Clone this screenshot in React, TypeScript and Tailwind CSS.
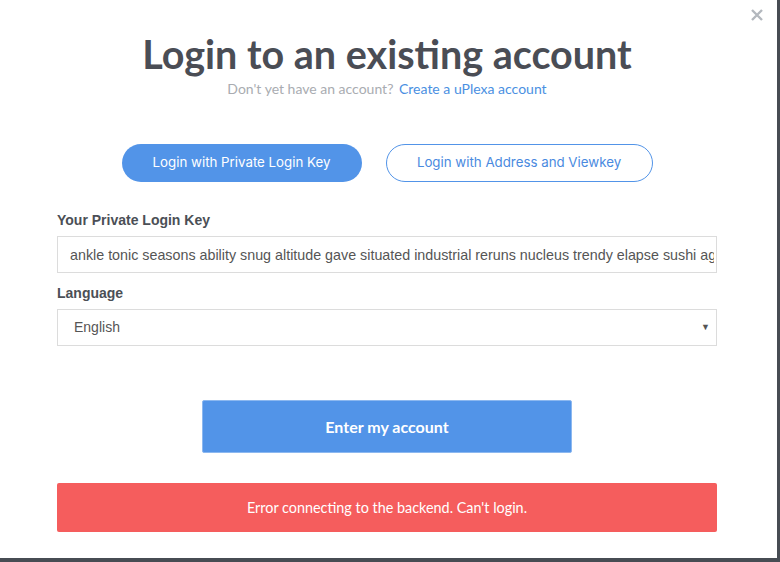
import React from 'react';

export default function App() {
  return (
    <div className="w-[780px] h-[562px] bg-[#474c53] overflow-hidden">
      <div className="relative w-[777px] h-[558px] bg-white pl-[57px] pt-[32px] font-['Liberation_Sans',sans-serif]">
        <button className="absolute right-[13px] top-[8px] text-[#b3b8be]">
          <svg width="14" height="14" viewBox="0 0 14 14" fill="none">
            <path d="M2 2L12 12M12 2L2 12" stroke="currentColor" strokeWidth="2.4" />
          </svg>
        </button>

        <div className="w-[660px]">
          <h1 className="text-center font-['Lato',sans-serif] font-bold text-[39.5px] leading-[44px] text-[#4a4d55]">
            Login to an existing account
          </h1>
          <p className="mt-[2px] text-center font-['Lato',sans-serif] text-[14px] text-[#a9acb1]">
            Don't yet have an account?{' '}
            <a className="ml-[2px] text-[#4a90e2]">Create a uPlexa account</a>
          </p>

          <div className="mt-[45px] flex justify-center gap-[24px] font-['Inter',sans-serif] text-[13.3px]">
            <button className="w-[240px] h-[38px] rounded-full bg-[#5294e8] text-white">
              Login with Private Login Key
            </button>
            <button className="w-[267px] h-[38px] rounded-full border border-[#5294e8] bg-white text-[#4a8ae0]">
              Login with Address and Viewkey
            </button>
          </div>

          <label className="block mt-[29px] text-[14px] font-bold text-[#4b4f56] leading-[18px]">
            Your Private Login Key
          </label>
          <input
            readOnly
            value="ankle tonic seasons ability snug altitude gave situated industrial reruns nucleus trendy elapse sushi agony"
            className="block w-full mt-[7px] h-[37px] border border-[#dcdcdc] pl-[12px] pr-[2px] outline-none text-[14.3px] text-[#555] font-['Liberation_Sans',sans-serif]"
          />

          <label className="block mt-[11px] text-[14px] font-bold text-[#4b4f56] leading-[18px]">
            Language
          </label>
          <div className="mt-[7px] h-[37px] border border-[#dcdcdc] flex items-center justify-between pl-[16px] pr-[6px] text-[14px] text-[#555]">
            <span>English</span>
            <span className="text-[9px] text-[#555]">▼</span>
          </div>

          <div className="mt-[54px] flex justify-center">
            <button className="w-[370px] h-[53px] rounded-[2px] border border-[#8cb8f0] bg-[#5294e8] text-white text-[16px] font-bold font-['Lato',sans-serif]">
              Enter my account
            </button>
          </div>

          <div className="mt-[30px] h-[49px] bg-[#f55d5d] rounded-[2px] flex items-center justify-center text-white text-[14.4px] font-['Lato',sans-serif]">
            Error connecting to the backend. Can't login.
          </div>
        </div>
      </div>
    </div>
  );
}
